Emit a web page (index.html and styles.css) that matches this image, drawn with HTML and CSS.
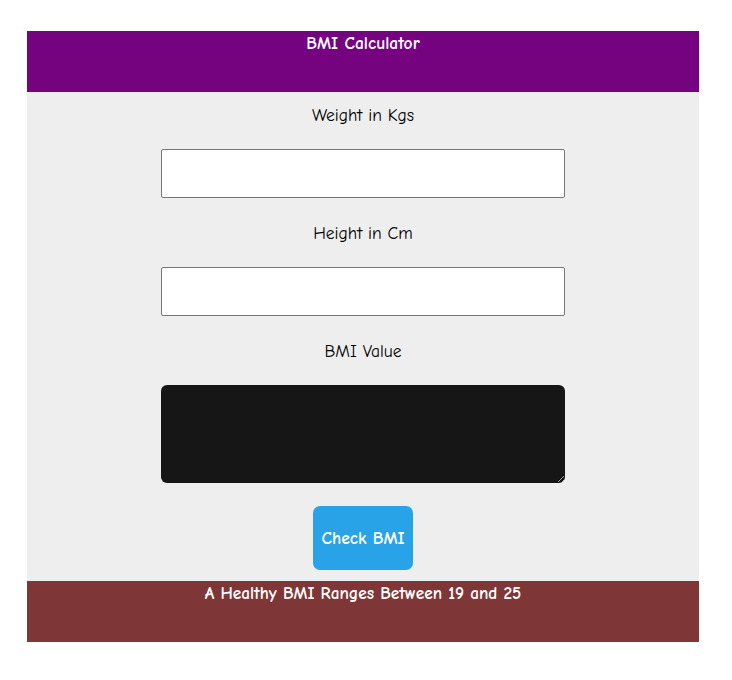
FILE: index.html
```html
<!DOCTYPE html>
<html>
<head>
<meta charset="utf-8">
<title>BMI Calculator</title>
<link rel="stylesheet" href="styles.css">
</head>
<body>
<div class="app">
  <header class="top">BMI Calculator</header>
  <main class="form">
    <label class="label" for="w">Weight in Kgs</label>
    <input class="field" id="w" type="text">
    <label class="label gap" for="h">Height in Cm</label>
    <input class="field" id="h" type="text">
    <label class="label gap" for="r">BMI Value</label>
    <textarea class="result" id="r"></textarea>
    <button class="btn">Check BMI</button>
  </main>
  <footer class="bottom">A Healthy BMI Ranges Between 19 and 25</footer>
</div>
</body>
</html>
```
FILE: styles.css
```css
html, body {
  margin: 0;
  padding: 0;
  background: #ffffff;
}
body {
  padding: 31px 0 0 27px;
  font-family: "Comic Sans MS", "Comic Neue", "Open Sans", sans-serif;
  font-size: 17.5px;
}
.app {
  width: 672px;
}
.top, .bottom {
  height: 61px;
  box-sizing: border-box;
  padding-top: 1px;
  color: #ffffff;
  font-weight: bold;
  text-align: center;
  line-height: 22px;
  font-size: 17.5px;
}
.bottom { font-size: 17.3px; }
.top { background: #750380; }
.bottom { background: #7f3636; }
.form {
  background: #eeeeee;
  display: flex;
  flex-direction: column;
  align-items: center;
  padding: 12px 0 11px;
}
.label {
  line-height: 22px;
  height: 22px;
  color: #000;
  font-size: 17.5px;
}
.label.gap { margin-top: 24px; }
.field {
  margin-top: 23px;
  width: 404px;
  height: 49px;
  box-sizing: border-box;
  border: 1px solid #767676;
  border-radius: 2px;
  background: #fff;
  padding: 0;
}
.result {
  margin-top: 23px;
  width: 404px;
  height: 98px;
  box-sizing: border-box;
  border: none;
  border-radius: 6px;
  background: #161616;
  padding: 0;
  display: block;
}
.btn {
  margin-top: 23px;
  width: 100px;
  height: 64px;
  border: none;
  border-radius: 7px;
  background: #29a3e8;
  color: #fff;
  font-family: inherit;
  font-weight: bold;
  font-size: 17.5px;
  padding: 0;
}
```
